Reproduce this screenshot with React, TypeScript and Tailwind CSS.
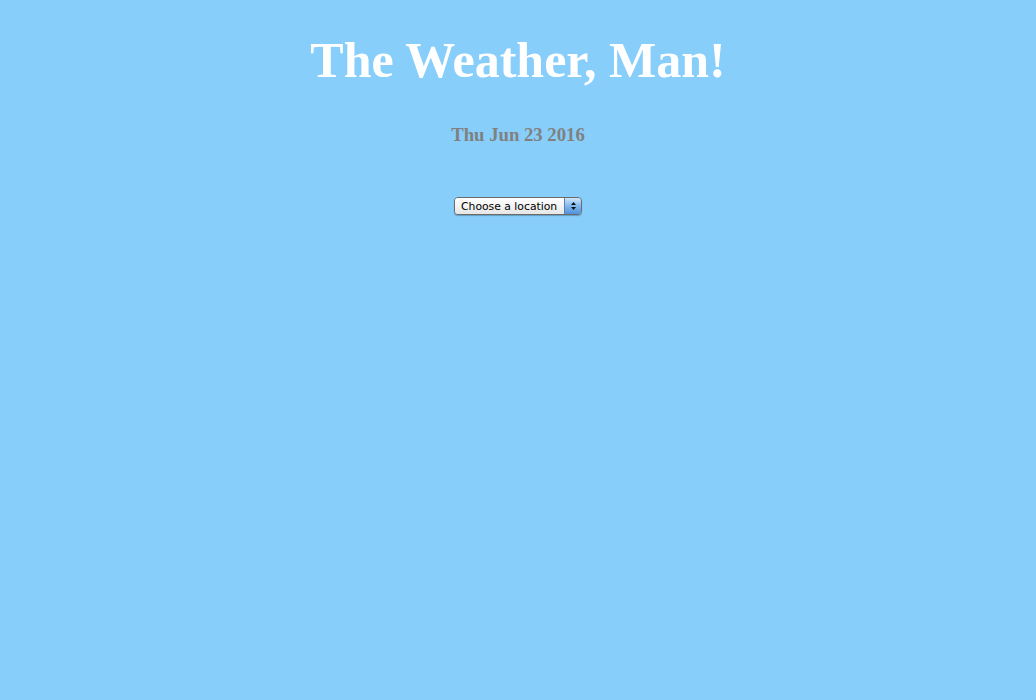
import React from "react";

export default function App() {
  return (
    <div className="min-h-[700px] w-full bg-[#87cefa] text-center" style={{ fontFamily: '"Liberation Serif", "Times New Roman", serif' }}>
      <div className="pt-[32px]">
        <h1 className="text-[50px] leading-[56px] font-bold text-white">The Weather, Man!</h1>
        <h3 className="mt-[36px] text-[18.72px] leading-[22px] font-bold text-[#808080]">Thu Jun 23 2016</h3>
        <div className="mt-[51px] flex justify-center">
          <div className="flex h-[18px] w-[128px] items-stretch overflow-hidden rounded-[4px] border border-[#6b6b6b] shadow-[0_1px_1px_rgba(0,0,0,0.25)]">
            <div
              className="flex flex-1 items-center bg-gradient-to-b from-[#ffffff] via-[#f4f4f4] to-[#e6e6e6] pl-[6px] pt-[2px] text-[10.8px] leading-none text-black"
              style={{ fontFamily: '"DejaVu Sans", "Noto Sans", sans-serif' }}
            >
              Choose a location
            </div>
            <div className="flex w-[17px] flex-col items-center justify-center gap-[2px] border-l border-[#5a7fb0] bg-gradient-to-b from-[#cfe6fb] via-[#7fb6ec] to-[#4f93dc]">
              <svg width="5" height="3" viewBox="0 0 5 3"><path d="M2.5 0 L5 3 L0 3 Z" fill="#111" /></svg>
              <svg width="5" height="3" viewBox="0 0 5 3"><path d="M0 0 L5 0 L2.5 3 Z" fill="#111" /></svg>
            </div>
          </div>
        </div>
      </div>
    </div>
  );
}
